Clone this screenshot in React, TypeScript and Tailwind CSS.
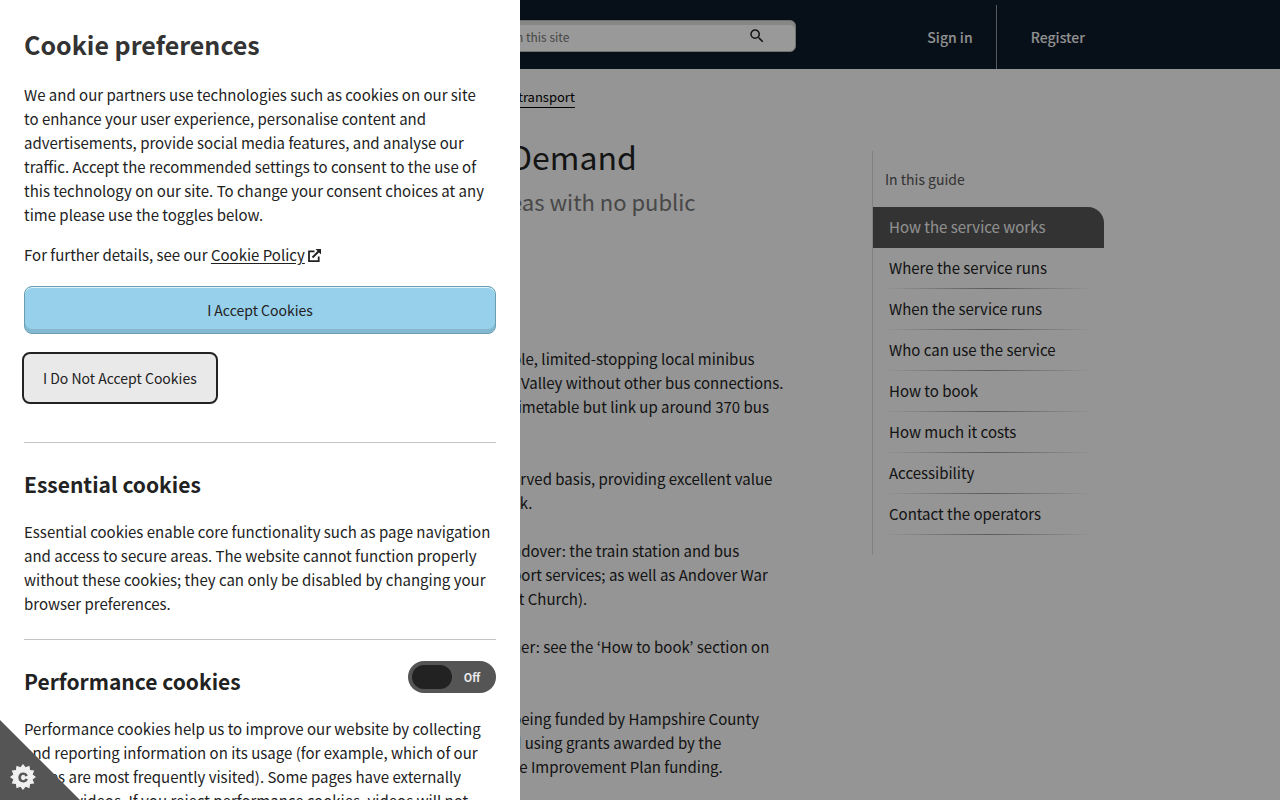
import { useState } from 'react'
import { MdSearch } from 'react-icons/md'

const guideLinks = [
  'How the service works',
  'Where the service runs',
  'When the service runs',
  'Who can use the service',
  'How to book',
  'How much it costs',
  'Accessibility',
  'Contact the operators'
]

function ExternalIcon() {
  return (
    <svg viewBox="0 0 13 13" className="ml-[3px] inline-block size-[13px] align-[-1px]" fill="none" stroke="currentColor" strokeWidth="1.8" aria-hidden="true">
      <path d="M6.5 2.4H1v9.7h9.7V7.5" />
      <path d="M4.5 8.5 11 2" strokeWidth="2" />
      <path d="M7.5 0H13v5.5z" fill="currentColor" stroke="none" />
    </svg>
  )
}

function CookieBadge() {
  const teeth = Array.from({ length: 24 }, (_, i) => {
    const r = i % 2 === 0 ? 13 : 10
    const a = (i * Math.PI) / 12
    return `${23 + r * Math.cos(a)},${57 + r * Math.sin(a)}`
  }).join(' ')

  return (
    <button type="button" aria-label="Cookie control" className="fixed bottom-0 left-0 z-30">
      <svg viewBox="0 0 80 80" className="block size-20">
        <polygon points="0,0 80,80 0,80" fill="#555555" />
        <polygon points={teeth} fill="#f0f0f0" />
        <text x="23" y="62" textAnchor="middle" fontSize="13" fontWeight="700" fontFamily="Liberation Sans, sans-serif" fill="#555555" stroke="#555555" strokeWidth="0.8">
          C
        </text>
      </svg>
    </button>
  )
}

function Header() {
  return (
    <header className="bg-[#0d1b28]">
      <div className="mx-auto flex h-[69px] max-w-[928px] items-start">
        <form className="mt-5 ml-auto flex h-8 w-[320px] items-center rounded-md border border-[#bbb] bg-white shadow-[inset_0_4px_0_#e0e0e0]">
          <label htmlFor="search" className="sr-only">Search this site</label>
          <input id="search" type="search" placeholder="Search this site" className="w-full flex-1 bg-transparent pt-0.5 pl-2 text-[12px] placeholder:text-[#767676]" />
          <button type="submit" aria-label="Search" className="mr-[29px] text-[#222]">
            <MdSearch size={18} />
          </button>
        </form>
        <nav className="mt-[5px] ml-[108px] flex self-stretch text-[14px] leading-6 text-[#f0f0f0]">
          <a href="#" className="flex w-[93px] items-center justify-center border-r border-[#8f979e] font-medium">Sign in</a>
          <a href="#" className="flex w-[107px] items-center justify-end pr-[19px] font-medium">Register</a>
        </nav>
      </div>
    </header>
  )
}

function Guide() {
  return (
    <aside className="mt-[82px] w-[232px] shrink-0 self-start border-l border-[#d8d8d8] pb-5">
      <h2 className="py-4 pl-3 text-[14px] leading-6 text-[#555]">In this guide</h2>
      <ul>
        {guideLinks.map((label, i) => (
          <li key={label} className={i === 0 ? 'rounded-tr-2xl bg-[#555] text-[#f0f0f0]' : ''}>
            <a href="#" className="block py-2 pl-4 text-[15px] leading-6">{label}</a>
            <div className={i === 0 ? 'h-px' : 'mx-3 h-px bg-linear-to-r from-transparent via-[#999] to-transparent'} />
          </li>
        ))}
      </ul>
    </aside>
  )
}

function Line({ children }: { children: string }) {
  return <span className="block">{children}</span>
}

function Article() {
  return (
    <main className="flex-1 pl-[334px] text-[15px] leading-6 whitespace-nowrap">
      <nav className="pt-[17px] leading-5">
        <a href="#" className="inline-block border-b border-black pl-2 text-[13px] text-black">transport</a>
      </nav>
      <h1 className="mt-6 text-[32px] leading-12">Demand</h1>
      <p className="mt-[3px] text-[22px] leading-9 text-[#777]">eas with no public</p>
      <div className="mt-[128px] flex flex-col gap-6 pl-0.5">
        <p className="min-h-24">
          <Line>ble, limited-stopping local minibus</Line>
          <Line>t Valley without other bus connections.</Line>
          <Line>timetable but link up around 370 bus</Line>
        </p>
        <p>
          <Line>erved basis, providing excellent value</Line>
          <Line>ck.</Line>
        </p>
        <p>
          <Line>ndover: the train station and bus</Line>
          <Line>port services; as well as Andover War</Line>
          <Line>st Church).</Line>
        </p>
        <p className="min-h-12">
          <Line>her: see the ‘How to book’ section on</Line>
        </p>
        <p>
          <Line>being funded by Hampshire County</Line>
          <Line>d using grants awarded by the</Line>
          <Line>ce Improvement Plan funding.</Line>
        </p>
      </div>
    </main>
  )
}

function CookieDrawer() {
  const [performance, setPerformance] = useState(false)

  return (
    <div role="dialog" aria-labelledby="cookie-title" className="fixed inset-y-0 left-0 z-20 w-[520px] max-w-full overflow-hidden bg-white px-6 pt-[22px] text-[15px] leading-6">
      <h2 id="cookie-title" className="text-[25px] leading-11 font-bold text-[#333]">Cookie preferences</h2>
      <p className="mt-[17px] whitespace-nowrap">
        <Line>We and our partners use technologies such as cookies on our site</Line>
        <Line>to enhance your user experience, personalise content and</Line>
        <Line>advertisements, provide social media features, and analyse our</Line>
        <Line>traffic. Accept the recommended settings to consent to the use of</Line>
        <Line>this technology on our site. To change your consent choices at any</Line>
        <Line>time please use the toggles below.</Line>
      </p>
      <p className="mt-4">
        For further details, see our{' '}
        <a href="#" className="underline underline-offset-2">Cookie Policy</a>
        <ExternalIcon />
      </p>
      <button type="button" className="mt-[19px] block h-12 w-full rounded-lg border border-[#6a9fb3] bg-[#97d0ea] text-[14px] shadow-[inset_0_1px_0_#e0f3fb,inset_0_-4px_0_#84b8d0]">
        I Accept Cookies
      </button>
      <button type="button" className="mt-5 block h-12 rounded-md bg-[#e9e9e9] px-[19px] text-[14px] outline-2 outline-[#222]">
        I Do Not Accept Cookies
      </button>

      <hr className="mt-10 border-[#c4c4c4]" />
      <h3 className="mt-[21px] text-[21px] leading-10 font-bold">Essential cookies</h3>
      <p className="mt-4 whitespace-nowrap">
        <Line>Essential cookies enable core functionality such as page navigation</Line>
        <Line>and access to secure areas. The website cannot function properly</Line>
        <Line>without these cookies; they can only be disabled by changing your</Line>
        <Line>browser preferences.</Line>
      </p>

      <hr className="mt-[23px] border-[#c4c4c4]" />
      <div className="mt-[21px] flex items-start justify-between">
        <h3 className="text-[21px] leading-10 font-bold">Performance cookies</h3>
        <label className="flex h-8 w-[88px] cursor-pointer items-center rounded-full bg-[#555] p-1 text-[11px] font-bold text-[#e9e9e9]">
          <input type="checkbox" aria-label="Performance cookies" className="sr-only" checked={performance} onChange={(e) => setPerformance(e.target.checked)} />
          <span className="h-6 w-10 rounded-full bg-[#222]" />
          <span className="flex-1 text-center">{performance ? 'On' : 'Off'}</span>
        </label>
      </div>
      <p className="mt-4 whitespace-nowrap">
        <Line>Performance cookies help us to improve our website by collecting</Line>
        <Line>and reporting information on its usage (for example, which of our</Line>
        <Line>pages are most frequently visited). Some pages have externally</Line>
        <Line>hosted videos. If you reject performance cookies, videos will not</Line>
      </p>
    </div>
  )
}

export default function App() {
  return (
    <div className="min-h-screen bg-[#f8f8f8] font-['Noto_Sans_CJK_KR','Noto_Sans',sans-serif] text-[#222]">
      <Header />
      <div className="mx-auto flex max-w-[928px]">
        <Article />
        <Guide />
      </div>
      <div className="fixed inset-0 z-10 bg-black/40" />
      <CookieDrawer />
      <CookieBadge />
    </div>
  )
}
